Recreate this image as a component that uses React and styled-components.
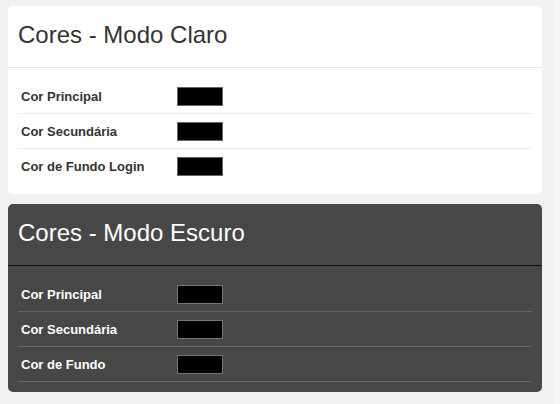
import React from 'react';
import styled, { createGlobalStyle } from 'styled-components';

const GlobalStyle = createGlobalStyle`
  html, body {
    margin: 0;
    padding: 0;
    background: #f7f7f7;
    font-family: "Liberation Sans", Arial, sans-serif;
  }
`;

const Page = styled.div`
  width: 554px;
  min-height: 404px;
  box-sizing: border-box;
  padding: 6px 12px 8px 8px;
  background: #f1f1f1;
`;

const Card = styled.section`
  background: ${({ $dark }) => ($dark ? '#474747' : '#ffffff')};
  color: ${({ $dark }) => ($dark ? '#ffffff' : '#333333')};
  border-radius: 5px;
  margin-bottom: 10px;
  overflow: hidden;
`;

const CardHeader = styled.h2`
  margin: 0;
  height: 62px;
  box-sizing: border-box;
  padding: 15px 10px 0;
  font-size: 24px;
  font-weight: 400;
  line-height: 1.15;
  border-bottom: 1px solid ${({ $dark }) => ($dark ? '#111111' : '#e6e6e6')};
`;

const CardBody = styled.div`
  padding: 11px 10px 10px;
`;

const Row = styled.div`
  display: grid;
  grid-template-columns: 159px 1fr;
  align-items: center;
  height: 35px;
  box-sizing: border-box;
  border-bottom: 1px solid ${({ $dark }) => ($dark ? '#666666' : '#ebebeb')};

  ${({ $dark }) => !$dark && `&:last-child { border-bottom-color: transparent; }`}
`;

const Label = styled.span`
  padding-left: 3px;
  font-size: 13px;
  font-weight: 700;
`;

const Swatch = styled.span`
  display: block;
  width: 46px;
  height: 19px;
  box-sizing: border-box;
  background: ${({ $color }) => $color};
  border: 1px solid ${({ $dark }) => ($dark ? '#777777' : '#666666')};
`;

const sections = [
  {
    title: 'Cores - Modo Claro',
    dark: false,
    rows: ['Cor Principal', 'Cor Secundária', 'Cor de Fundo Login'],
  },
  {
    title: 'Cores - Modo Escuro',
    dark: true,
    rows: ['Cor Principal', 'Cor Secundária', 'Cor de Fundo'],
  },
];

export default function App() {
  return (
    <>
      <GlobalStyle />
      <Page>
        {sections.map((s) => (
          <Card key={s.title} $dark={s.dark}>
            <CardHeader $dark={s.dark}>{s.title}</CardHeader>
            <CardBody>
              {s.rows.map((label) => (
                <Row key={label} $dark={s.dark}>
                  <Label>{label}</Label>
                  <Swatch $color="#000000" $dark={s.dark} />
                </Row>
              ))}
            </CardBody>
          </Card>
        ))}
      </Page>
    </>
  );
}
